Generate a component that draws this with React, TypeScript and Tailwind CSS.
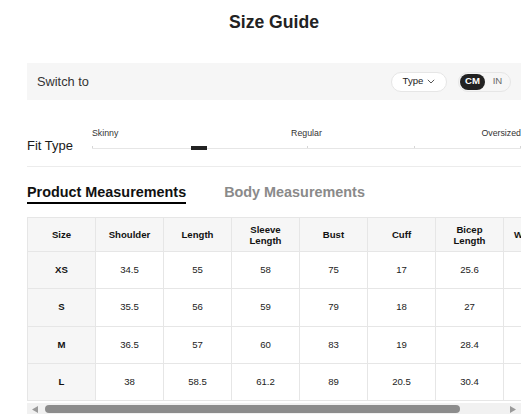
import React from "react";

const font = { fontFamily: '"Liberation Sans", Arial, sans-serif' };

const headers: string[][] = [
  ["Size"],
  ["Shoulder"],
  ["Length"],
  ["Sleeve", "Length"],
  ["Bust"],
  ["Cuff"],
  ["Bicep", "Length"],
  ["Waist Size"],
];

const rows: string[][] = [
  ["XS", "34.5", "55", "58", "75", "17", "25.6", "66"],
  ["S", "35.5", "56", "59", "79", "18", "27", "70"],
  ["M", "36.5", "57", "60", "83", "19", "28.4", "74"],
  ["L", "38", "58.5", "61.2", "89", "20.5", "30.4", "80"],
];

export default function App() {
  return (
    <div className="h-[414px] w-[530px] overflow-hidden bg-white text-[#222]" style={font}>
      <div className="ml-[27px] w-[494px]">
        {/* Title */}
        <div className="flex h-[44px] items-center justify-center text-[17.6px] font-bold text-[#222]">
          Size Guide
        </div>

        {/* Switch bar */}
        <div className="mt-[19px] flex h-[37px] items-center justify-between bg-[#f6f6f6] pl-[10px] pr-[10px]">
          <span className="text-[12.8px] text-[#333]">Switch to</span>
          <div className="flex items-center gap-[11px]">
            <button className="flex h-[20px] w-[56px] items-center justify-center gap-[4px] rounded-full border border-[#e6e6e6] bg-white text-[9.6px] text-[#222]">
              <span>Type</span>
              <svg width="8" height="5" viewBox="0 0 8 5" fill="none">
                <path d="M0.8 0.8 L4 4 L7.2 0.8" stroke="#444" strokeWidth="0.9" />
              </svg>
            </button>
            <div className="flex h-[20px] w-[53px] items-center rounded-full border border-[#e6e6e6] bg-[#f6f6f6] pl-[1px]">
              <div className="flex h-[16px] w-[25px] items-center justify-center rounded-full bg-[#222] text-[9.6px] font-bold text-white">
                CM
              </div>
              <div className="flex flex-1 items-center justify-center text-[9.6px] text-[#666]">IN</div>
            </div>
          </div>
        </div>

        {/* Fit type */}
        <div className="flex h-[67px] items-start border-b border-[#ececec]">
          <div className="mt-[36px] w-[65px] text-[13px] text-[#1a1a1a]">Fit Type</div>
          <div className="relative mt-[28px] h-[24px] flex-1">
            <span className="absolute left-0 top-0 text-[8.8px] leading-[10px] text-[#333]">Skinny</span>
            <span className="absolute left-1/2 top-0 -translate-x-1/2 text-[8.8px] leading-[10px] text-[#333]">
              Regular
            </span>
            <span className="absolute right-0 top-0 text-[8.8px] leading-[10px] text-[#333]">Oversized</span>
            <div className="absolute left-0 right-0 top-[20px] h-px bg-[#e6e6e6]" />
            <div className="absolute left-0 top-[18px] h-[2px] w-px bg-[#d6d6d6]" />
            <div className="absolute left-1/2 top-[18px] h-[2px] w-px bg-[#d6d6d6]" />
            <div className="absolute left-3/4 top-[18px] h-[2px] w-px bg-[#d6d6d6]" />
            <div className="absolute right-0 top-[18px] h-[2px] w-px bg-[#d6d6d6]" />
            <div className="absolute left-[99px] top-[18px] h-[4px] w-[16px] bg-[#222]" />
          </div>
        </div>

        {/* Tabs */}
        <div className="mt-[16px] flex h-[21px] items-start gap-[38px] text-[14.4px] font-bold leading-[18px]">
          <div className="border-b-2 border-[#000] pb-[1px] text-[#111]">Product Measurements</div>
          <div className="text-[#8a8a8a]">Body Measurements</div>
        </div>

        {/* Table */}
        <div className="mt-[13px] w-[494px] overflow-hidden">
          <table className="w-[544px] table-fixed border-collapse text-center text-[9.6px]">
            <thead>
              <tr>
                {headers.map((h, i) => (
                  <th
                    key={i}
                    className="h-[34px] w-[68px] border border-[#e6e6e6] bg-[#f6f6f6] px-[8px] font-bold leading-[11px] text-[#111]"
                  >
                    {h.map((line, j) => (
                      <div key={j} className="whitespace-nowrap">
                        {line}
                      </div>
                    ))}
                  </th>
                ))}
              </tr>
            </thead>
            <tbody>
              {rows.map((r, i) => (
                <tr key={i}>
                  {r.map((c, j) => (
                    <td
                      key={j}
                      className={
                        j === 0
                          ? "h-[37.3px] border border-[#e6e6e6] bg-[#f6f6f6] font-bold text-[#111]"
                          : "h-[37.3px] border border-[#e6e6e6] bg-white text-[#222]"
                      }
                    >
                      {j === 7 ? "" : c}
                    </td>
                  ))}
                </tr>
              ))}
            </tbody>
          </table>
        </div>

        {/* Horizontal scrollbar */}
        <div className="mt-[2px] flex h-[12px] items-center bg-[#f1f1f1]">
          <div className="flex w-[16px] justify-center">
            <svg width="6" height="7" viewBox="0 0 6 7">
              <path d="M6 0 L0 3.5 L6 7 Z" fill="#9a9a9a" />
            </svg>
          </div>
          <div className="ml-[2px] h-[8px] w-[415px] rounded-full bg-[#8c8c8c]" />
          <div className="flex-1" />
          <div className="flex w-[16px] justify-center">
            <svg width="6" height="7" viewBox="0 0 6 7">
              <path d="M0 0 L6 3.5 L0 7 Z" fill="#9a9a9a" />
            </svg>
          </div>
        </div>
      </div>
    </div>
  );
}
